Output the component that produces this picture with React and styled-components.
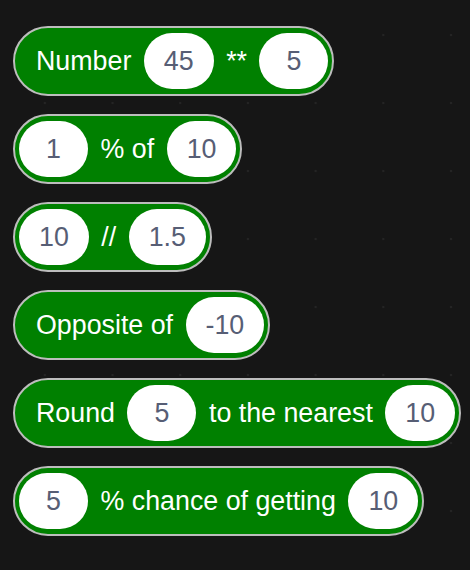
import React from 'react';
import styled, { createGlobalStyle } from 'styled-components';

const GlobalStyle = createGlobalStyle`
  html, body {
    margin: 0;
    padding: 0;
    background-color: #161616;
  }
  body {
    font-family: "Liberation Sans", Arial, sans-serif;
  }
`;

const Canvas = styled.div`
  width: 470px;
  height: 570px;
  box-sizing: border-box;
  padding: 26px 0 0 13px;
  display: flex;
  flex-direction: column;
  align-items: flex-start;
  gap: 18px;
  overflow: hidden;
  background-color: #161616;
  background-image: radial-gradient(circle, #242424 1.2px, transparent 1.6px);
  background-size: 67.7px 68px;
  background-position: 11px 1px;
`;

const Block = styled.div`
  display: flex;
  align-items: center;
  gap: 12.5px;
  box-sizing: border-box;
  height: 70px;
  padding: 0 4px;
  border: 2px solid #bdbdbd;
  border-radius: 35px;
  background: #008000;
`;

const Label = styled.span`
  color: #fff;
  font-size: 26.8px;
  white-space: nowrap;
  &:first-child {
    margin-left: 17px;
  }
  &:last-child {
    margin-right: 17px;
  }
`;

const Input = styled.span`
  display: flex;
  align-items: center;
  justify-content: center;
  box-sizing: border-box;
  min-width: 69px;
  height: 56px;
  padding: 0 20px;
  border-radius: 28px;
  background: #fff;
  color: #575e75;
  font-size: 26.8px;
`;

const blocks = [
  ['Number', 45, '**', 5],
  [1, '% of', 10],
  [10, '//', 1.5],
  ['Opposite of', -10],
  ['Round', 5, 'to the nearest', 10],
  [5, '% chance of getting', 10],
];

export default function App() {
  return (
    <>
      <GlobalStyle />
      <Canvas>
        {blocks.map((parts, i) => (
          <Block key={i}>
            {parts.map((p, j) =>
              typeof p === 'number' ? (
                <Input key={j}>{p}</Input>
              ) : (
                <Label key={j}>{p}</Label>
              )
            )}
          </Block>
        ))}
      </Canvas>
    </>
  );
}
